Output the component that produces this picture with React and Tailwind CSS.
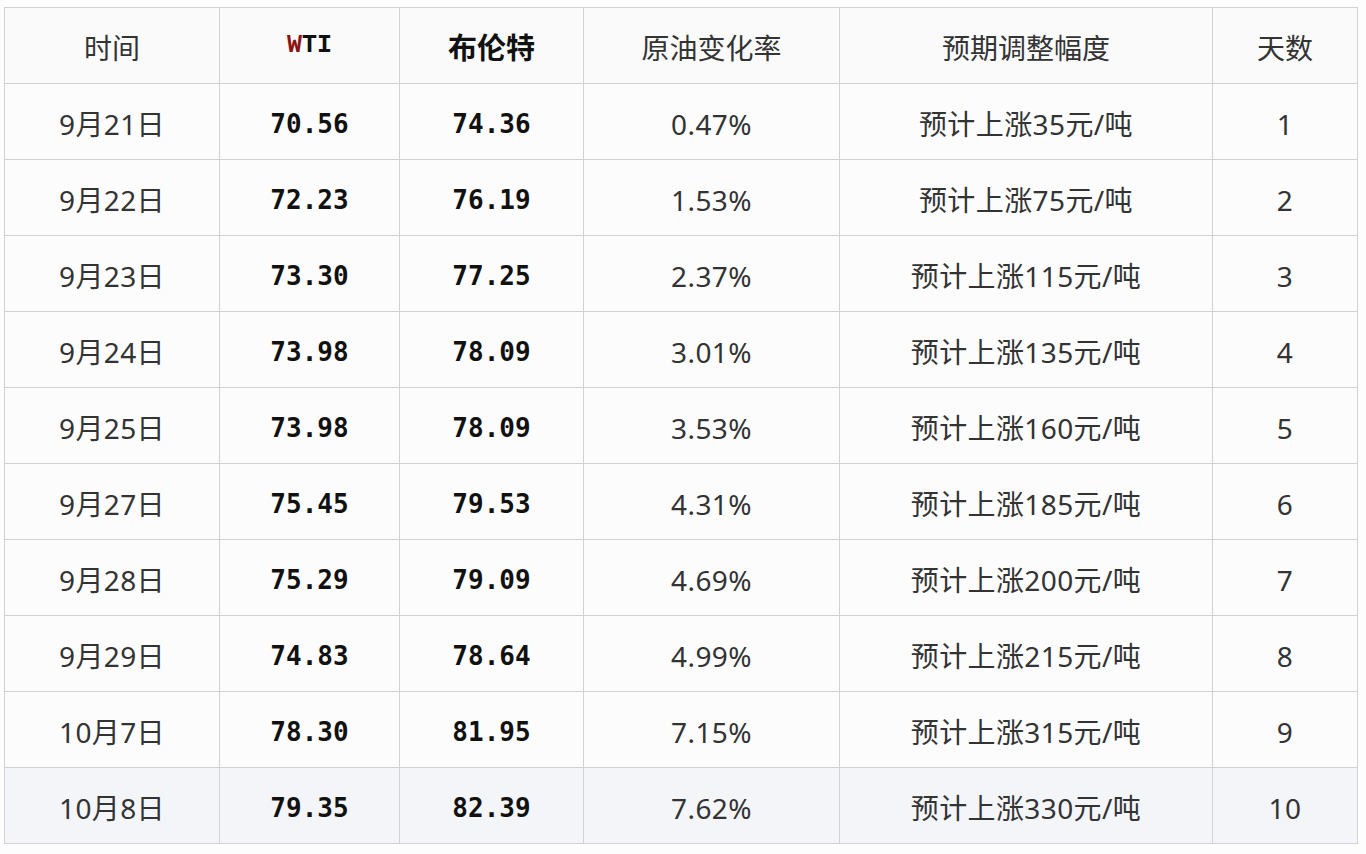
import React from "react";

const rows = [
  ["9月21日", "70.56", "74.36", "0.47%", "预计上涨35元/吨", "1"],
  ["9月22日", "72.23", "76.19", "1.53%", "预计上涨75元/吨", "2"],
  ["9月23日", "73.30", "77.25", "2.37%", "预计上涨115元/吨", "3"],
  ["9月24日", "73.98", "78.09", "3.01%", "预计上涨135元/吨", "4"],
  ["9月25日", "73.98", "78.09", "3.53%", "预计上涨160元/吨", "5"],
  ["9月27日", "75.45", "79.53", "4.31%", "预计上涨185元/吨", "6"],
  ["9月28日", "75.29", "79.09", "4.69%", "预计上涨200元/吨", "7"],
  ["9月29日", "74.83", "78.64", "4.99%", "预计上涨215元/吨", "8"],
  ["10月7日", "78.30", "81.95", "7.15%", "预计上涨315元/吨", "9"],
  ["10月8日", "79.35", "82.39", "7.62%", "预计上涨330元/吨", "10"],
];

const cjk = "font-['Noto_Sans','Noto_Sans_CJK_SC',sans-serif] tracking-[0.4px]";
const cjkHead = "font-['Noto_Sans_CJK_SC','Noto_Sans',sans-serif]";
const mono = "font-['DejaVu_Sans_Mono','Liberation_Mono',monospace]";
const cell = "border border-[#d2d2d4] h-[76px] p-0 text-center align-middle";

export default function App() {
  return (
    <div className="min-h-[854px] w-[1366px] bg-[#fdfdfd] pt-[7px] pl-[4px]">
      <table className="border-collapse table-fixed w-[1353px]">
        <colgroup>
          <col className="w-[215px]" />
          <col className="w-[180px]" />
          <col className="w-[184px]" />
          <col className="w-[256px]" />
          <col className="w-[373px]" />
          <col className="w-[145px]" />
        </colgroup>
        <thead>
          <tr className="bg-[#fafafa]">
            <th className={`${cell} pt-[2px] ${cjkHead} font-normal text-[28px] text-[#333]`}>时间</th>
            <th className={`${cell} pt-[1px] font-['Liberation_Mono',monospace] font-bold text-[25px] text-[#111]`}>
              <span className="text-[#8a1414]">W</span>TI
            </th>
            <th className={`${cell} pt-[2px] ${cjkHead} font-bold text-[29px] text-[#111]`}>布伦特</th>
            <th className={`${cell} pt-[2px] ${cjkHead} font-normal text-[28px] text-[#333]`}>原油变化率</th>
            <th className={`${cell} pt-[2px] ${cjkHead} font-normal text-[28px] text-[#333]`}>预期调整幅度</th>
            <th className={`${cell} pt-[2px] ${cjkHead} font-normal text-[28px] text-[#333]`}>天数</th>
          </tr>
        </thead>
        <tbody>
          {rows.map((r, i) => (
            <tr key={i} className={i === rows.length - 1 ? "bg-[#f4f5f9]" : "bg-[#fcfcfc]"}>
              <td className={`${cell} pt-[4px] ${cjk} text-[28px] text-[#333]`}>{r[0]}</td>
              <td className={`${cell} pt-[5px] ${mono} font-bold text-[26px] text-[#111]`}>{r[1]}</td>
              <td className={`${cell} pt-[5px] ${mono} font-bold text-[26px] text-[#111]`}>{r[2]}</td>
              <td className={`${cell} pt-[4px] ${cjk} text-[28px] text-[#333]`}>{r[3]}</td>
              <td className={`${cell} pt-[4px] ${cjk} text-[28px] text-[#333]`}>{r[4]}</td>
              <td className={`${cell} pt-[4px] ${cjk} text-[28px] text-[#333]`}>{r[5]}</td>
            </tr>
          ))}
        </tbody>
      </table>
    </div>
  );
}
